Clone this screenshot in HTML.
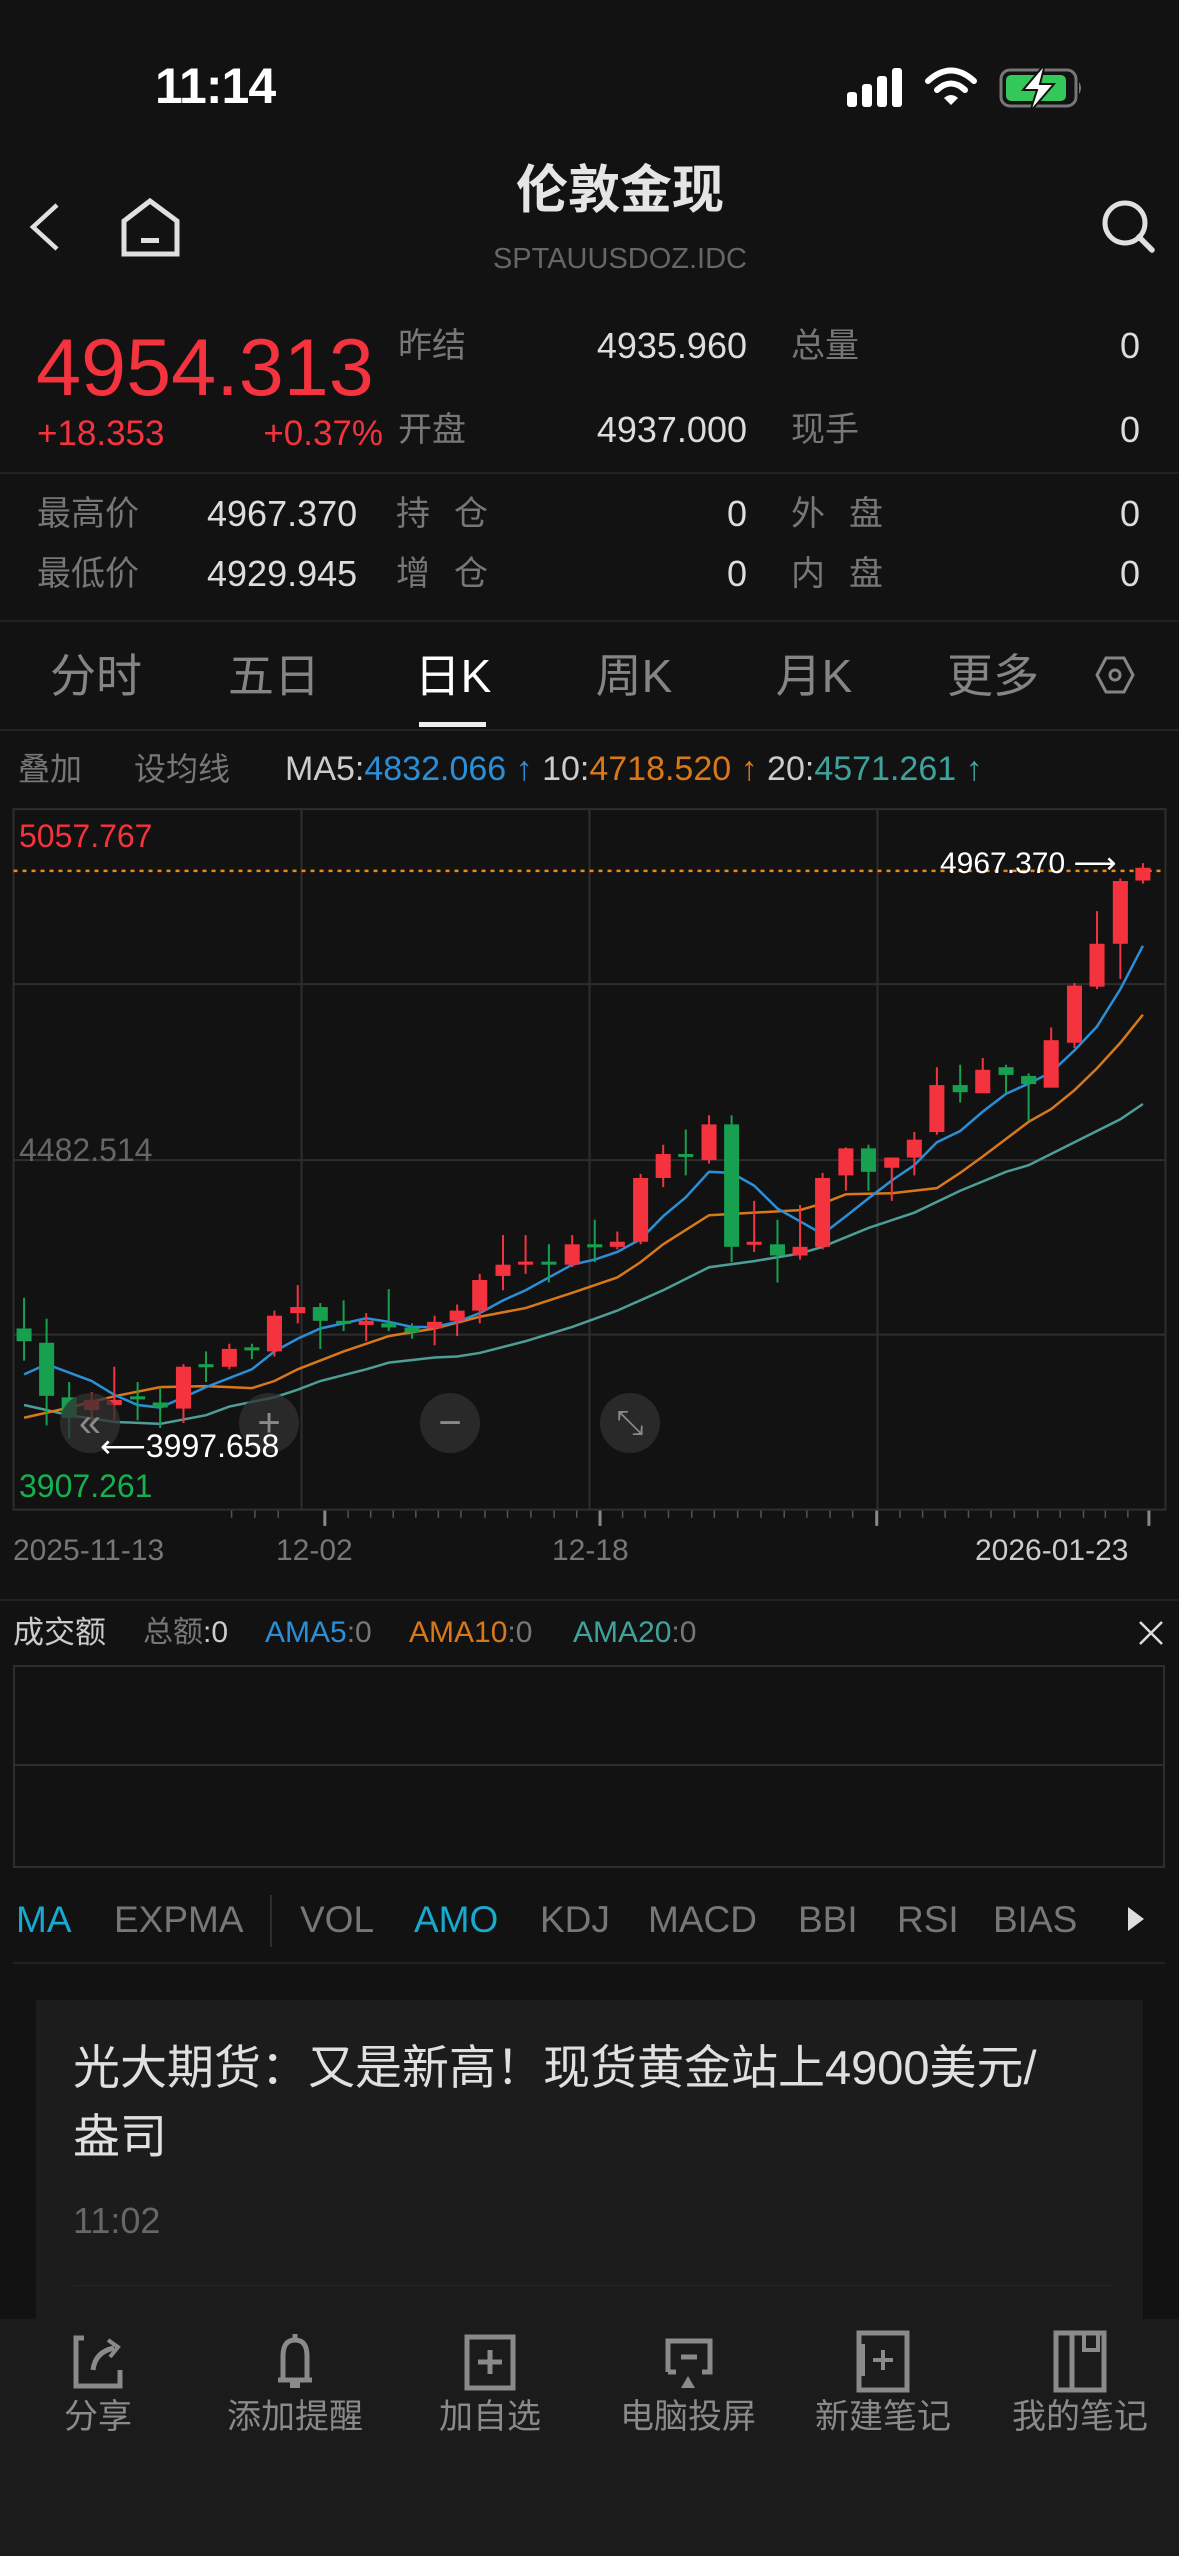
<!DOCTYPE html>
<html><head><meta charset="utf-8"><style>
*{margin:0;padding:0;box-sizing:border-box}
body{width:1179px;height:2556px;background:#121212;position:relative;overflow:hidden;font-family:"Liberation Sans","Noto Sans CJK SC",sans-serif;color:#ddd}
.a{position:absolute;white-space:nowrap}
.lbl{color:#777;font-size:34px;line-height:40px}
.val{color:#ddd;font-size:36px;line-height:40px}
.tab{position:absolute;top:648px;font-size:46px;line-height:56px;color:#858585;transform:translateX(-50%);white-space:nowrap}
.ind{position:absolute;top:1898px;font-size:37px;line-height:44px;color:#777;white-space:nowrap}
.bt{position:absolute;top:2397px;font-size:34px;line-height:40px;color:#8a8a8a;transform:translateX(-50%);white-space:nowrap}
.cb{position:absolute;width:60px;height:60px;border-radius:50%;background:rgba(50,50,50,.75);top:1393px;color:#8a8a8a;font-size:40px;line-height:60px;text-align:center}
</style></head><body>

<!-- status -->
<div class="a" style="left:155px;top:58px;font-size:50px;line-height:56px;font-weight:bold;color:#fff;letter-spacing:-1px">11:14</div>
<svg class="a" style="left:840px;top:60px" width="260" height="56" viewBox="0 0 260 56">
<rect x="7" y="32" width="10" height="15" rx="3" fill="#fff"/><rect x="22" y="24" width="10" height="23" rx="3" fill="#fff"/><rect x="37" y="16" width="10" height="31" rx="3" fill="#fff"/><rect x="52" y="8" width="10" height="39" rx="3" fill="#fff"/>
<path d="M88 21 Q111 0 134 21" stroke="#fff" stroke-width="6" fill="none" stroke-linecap="round"/>
<path d="M97 30 Q111 17 125 30" stroke="#fff" stroke-width="6" fill="none" stroke-linecap="round"/>
<path d="M104 38 L111 45 L118 38 Q111 32 104 38Z" fill="#fff"/>
<rect x="161" y="10" width="75" height="36" rx="9" stroke="#777" stroke-width="3" fill="none"/>
<rect x="166" y="15" width="60" height="26" rx="5" fill="#34c759"/>
<path d="M239 22 v12 q4-6 0-12z" fill="#777"/>
<path d="M205 4 L183 30 L197 30 L190 52 L214 24 L200 24 Z" fill="#fff" stroke="#121212" stroke-width="2"/>
</svg>

<!-- nav -->
<svg class="a" style="left:0;top:190px" width="200" height="80" viewBox="0 190 200 80">
<path d="M57 205 L33 227 L57 249" stroke="#e0e0e0" stroke-width="4.5" fill="none"/>
<path d="M150 201 L124 221 L124 254 L177 254 L177 221 Z" stroke="#e0e0e0" stroke-width="5" fill="none" stroke-linejoin="miter"/>
<rect x="141" y="238" width="18" height="5" fill="#e0e0e0"/>
</svg>
<div class="a" style="left:0;width:1240px;text-align:center;top:160px;font-size:52px;line-height:62px;color:#e5e5e5;font-weight:bold">伦敦金现</div>
<div class="a" style="left:0;width:1240px;text-align:center;top:242px;font-size:29px;line-height:34px;color:#666">SPTAUUSDOZ.IDC</div>
<svg class="a" style="left:1098px;top:196px" width="60" height="60" viewBox="0 0 60 60">
<circle cx="27" cy="27" r="20" stroke="#e0e0e0" stroke-width="5" fill="none"/><path d="M41 41 L54 54" stroke="#e0e0e0" stroke-width="5.5" stroke-linecap="round"/>
</svg>

<!-- quote -->
<div class="a" style="left:36px;top:320px;font-size:81px;line-height:96px;color:#f5333f">4954.313</div>
<div class="a" style="left:37px;top:414px;font-size:35px;line-height:40px;color:#f5333f">+18.353</div>
<div class="a" style="left:200px;width:183px;text-align:right;top:414px;font-size:35px;line-height:40px;color:#f5333f">+0.37%</div>
<div class="a lbl" style="left:398px;top:326px">昨结</div>
<div class="a val" style="left:560px;width:187px;text-align:right;top:326px">4935.960</div>
<div class="a lbl" style="left:791px;top:326px">总量</div>
<div class="a val" style="left:1040px;width:100px;text-align:right;top:326px">0</div>
<div class="a lbl" style="left:398px;top:410px">开盘</div>
<div class="a val" style="left:560px;width:187px;text-align:right;top:410px">4937.000</div>
<div class="a lbl" style="left:791px;top:410px">现手</div>
<div class="a val" style="left:1040px;width:100px;text-align:right;top:410px">0</div>
<div class="a" style="left:0;top:472px;width:1179px;height:2px;background:#222"></div>

<div class="a lbl" style="left:37px;top:494px">最高价</div>
<div class="a val" style="left:207px;top:494px">4967.370</div>
<div class="a lbl" style="left:396px;top:494px;letter-spacing:24px">持仓</div>
<div class="a val" style="left:650px;width:97px;text-align:right;top:494px">0</div>
<div class="a lbl" style="left:791px;top:494px;letter-spacing:24px">外盘</div>
<div class="a val" style="left:1040px;width:100px;text-align:right;top:494px">0</div>
<div class="a lbl" style="left:37px;top:554px">最低价</div>
<div class="a val" style="left:207px;top:554px">4929.945</div>
<div class="a lbl" style="left:396px;top:554px;letter-spacing:24px">增仓</div>
<div class="a val" style="left:650px;width:97px;text-align:right;top:554px">0</div>
<div class="a lbl" style="left:791px;top:554px;letter-spacing:24px">内盘</div>
<div class="a val" style="left:1040px;width:100px;text-align:right;top:554px">0</div>
<div class="a" style="left:0;top:620px;width:1179px;height:2px;background:#222"></div>

<!-- tabs -->
<div class="tab" style="left:96px">分时</div>
<div class="tab" style="left:274px">五日</div>
<div class="tab" style="left:453px;color:#fff">日K</div>
<div class="tab" style="left:634px">周K</div>
<div class="tab" style="left:814px">月K</div>
<div class="tab" style="left:993px">更多</div>
<svg class="a" style="left:1095px;top:655px" width="40" height="40" viewBox="0 0 40 40"><path d="M11 3 L29 3 L38 20 L29 37 L11 37 L2 20 Z" stroke="#858585" stroke-width="3" fill="none"/><circle cx="20" cy="20" r="5" stroke="#858585" stroke-width="3" fill="none"/></svg>
<div class="a" style="left:419px;top:722px;width:67px;height:5px;background:#eee"></div>
<div class="a" style="left:0;top:729px;width:1179px;height:2px;background:#242424"></div>

<div class="a" style="left:18px;top:750px;font-size:32px;line-height:38px;color:#777">叠加</div>
<div class="a" style="left:134px;top:750px;font-size:32px;line-height:38px;color:#777">设均线</div>
<div class="a" style="left:285px;top:749px;font-size:34px;line-height:40px;color:#ccc">MA5:<span style="color:#2b8fd8">4832.066 ↑</span> 10:<span style="color:#d9781a">4718.520 ↑</span> 20:<span style="color:#3fa39c">4571.261 ↑</span></div>

<!-- chart -->
<svg class="a" style="left:0;top:780px" width="1179" height="800" viewBox="0 0 1568 1568" preserveAspectRatio="none">
<g stroke="#2e2e2e" stroke-width="2" vector-effect="non-scaling-stroke" fill="none">
<rect x="18" y="57" width="1532" height="1373" vector-effect="non-scaling-stroke"/>
<line x1="18" y1="400" x2="1550" y2="400" vector-effect="non-scaling-stroke"/>
<line x1="18" y1="745" x2="1550" y2="745" vector-effect="non-scaling-stroke"/>
<line x1="18" y1="1087" x2="1550" y2="1087" vector-effect="non-scaling-stroke"/>
<line x1="401" y1="57" x2="401" y2="1430" vector-effect="non-scaling-stroke"/>
<line x1="784" y1="57" x2="784" y2="1430" vector-effect="non-scaling-stroke"/>
<line x1="1167" y1="57" x2="1167" y2="1430" vector-effect="non-scaling-stroke"/>
</g>
<g stroke="#555" stroke-width="1.5">
<path vector-effect="non-scaling-stroke" d="M308 1432v14M339 1432v14M370 1432v14M463 1432v14M493 1432v14M523 1432v14M553 1432v14M583 1432v14M613 1432v14M645 1432v14M675 1432v14M706 1432v14M737 1432v14M767 1432v14M828 1432v14M858 1432v14M889 1432v14M920 1432v14M950 1432v14M981 1432v14M1012 1432v14M1043 1432v14M1073 1432v14M1104 1432v14M1134 1432v14M1197 1432v14M1227 1432v14M1257 1432v14M1288 1432v14M1318 1432v14M1349 1432v14M1380 1432v14M1410 1432v14M1441 1432v14M1470 1432v14M1500 1432v14"/>
</g>
<g stroke="#888" stroke-width="3"><path vector-effect="non-scaling-stroke" d="M432 1432v30M798 1432v30M1166 1432v30M1528 1432v30"/></g>
<line x1="18" y1="178" x2="1550" y2="178" stroke="#f0891c" stroke-width="2.5" stroke-dasharray="4 5" vector-effect="non-scaling-stroke"/>
<polyline vector-effect="non-scaling-stroke" fill="none" stroke="#4e9e98" stroke-width="2.5" points="32,1225 92,1245 152,1258 213,1262 274,1245 305,1228 365,1210 396,1195 426,1178 487,1155 517,1142 578,1132 608,1130 638,1123 699,1100 761,1072 821,1040 882,1000 943,955 1003,943 1064,928 1094,915 1155,878 1216,848 1277,805 1338,768 1368,755 1429,710 1490,665 1520,635"/>
<polyline vector-effect="non-scaling-stroke" fill="none" stroke="#d9781a" stroke-width="2.5" points="32,1250 92,1230 152,1208 213,1190 274,1188 335,1192 365,1178 396,1155 457,1120 517,1090 578,1075 638,1052 699,1035 761,1005 821,975 852,945 882,910 943,853 1003,848 1064,843 1094,830 1125,812 1186,810 1246,800 1277,770 1307,738 1368,670 1398,645 1429,608 1459,565 1490,515 1520,460"/>
<polyline vector-effect="non-scaling-stroke" fill="none" stroke="#2b8fd8" stroke-width="2.5" points="32,1165 62,1145 122,1178 152,1205 183,1225 213,1230 244,1210 274,1190 335,1155 365,1120 396,1095 426,1075 487,1055 517,1062 548,1072 578,1072 608,1062 638,1045 669,1020 699,1000 730,975 761,950 791,940 821,925 852,900 882,855 912,818 943,768 973,770 1003,795 1034,840 1064,865 1094,890 1125,855 1155,820 1186,785 1216,755 1246,710 1277,688 1307,650 1338,615 1368,595 1398,573 1429,530 1459,483 1490,410 1520,325"/>
<g fill="#17a04f" stroke="#17a04f">
<path vector-effect="non-scaling-stroke" stroke-width="2" d="M32 1015V1138M62 1056V1265M92 1180V1290M183 1180V1255M213 1190V1270M274 1120V1180M335 1105V1135M426 1025V1115M457 1020V1080M517 998V1080M548 1065V1095M730 910V985M791 862V945M912 685V775M973 657V945M1034 862V985M1155 715V805M1277 558V632M1338 558V615M1368 575V668"/>
<g stroke="none">
<rect x="22" y="1075" width="20" height="25"/><rect x="52" y="1103" width="20" height="104"/><rect x="82" y="1210" width="20" height="40"/><rect x="173" y="1208" width="20" height="6"/><rect x="203" y="1220" width="20" height="10"/><rect x="264" y="1145" width="20" height="6"/><rect x="325" y="1112" width="20" height="6"/><rect x="416" y="1033" width="20" height="27"/><rect x="447" y="1060" width="20" height="6"/><rect x="507" y="1065" width="20" height="8"/><rect x="538" y="1073" width="20" height="10"/><rect x="720" y="944" width="20" height="6"/><rect x="781" y="910" width="20" height="6"/><rect x="902" y="733" width="20" height="6"/><rect x="963" y="675" width="20" height="240"/><rect x="1024" y="910" width="20" height="22"/><rect x="1145" y="722" width="20" height="46"/><rect x="1267" y="598" width="20" height="14"/><rect x="1328" y="563" width="20" height="15"/><rect x="1358" y="580" width="20" height="16"/>
</g></g>
<g fill="#f5333f" stroke="#f5333f">
<path vector-effect="non-scaling-stroke" stroke-width="2" d="M122 1200V1260M152 1150V1255M244 1145V1260M305 1105V1155M365 1040V1130M396 990V1065M487 1045V1100M578 1050V1108M608 1028V1090M638 968V1065M669 892V1000M699 892V968M761 892V955M821 885V920M852 772V910M882 715V798M943 657V752M1003 825V925M1064 833V940M1094 770V920M1125 720V805M1186 740V825M1216 690V775M1246 563V695M1307 545V614M1398 485V603M1429 398V525M1459 257V410M1490 193V390M1520 163V203"/>
<g stroke="none">
<rect x="112" y="1215" width="20" height="20"/><rect x="142" y="1215" width="20" height="10"/><rect x="234" y="1150" width="20" height="82"/><rect x="295" y="1115" width="20" height="35"/><rect x="355" y="1050" width="20" height="70"/><rect x="386" y="1033" width="20" height="12"/><rect x="477" y="1060" width="20" height="8"/><rect x="568" y="1062" width="20" height="13"/><rect x="598" y="1040" width="20" height="20"/><rect x="628" y="980" width="20" height="60"/><rect x="659" y="950" width="20" height="22"/><rect x="689" y="944" width="20" height="6"/><rect x="751" y="910" width="20" height="40"/><rect x="811" y="905" width="20" height="10"/><rect x="842" y="780" width="20" height="125"/><rect x="872" y="733" width="20" height="47"/><rect x="933" y="675" width="20" height="70"/><rect x="993" y="905" width="20" height="6"/><rect x="1054" y="915" width="20" height="17"/><rect x="1084" y="780" width="20" height="135"/><rect x="1115" y="722" width="20" height="53"/><rect x="1176" y="740" width="20" height="20"/><rect x="1206" y="705" width="20" height="35"/><rect x="1236" y="598" width="20" height="92"/><rect x="1297" y="568" width="20" height="46"/><rect x="1388" y="510" width="20" height="93"/><rect x="1419" y="403" width="20" height="112"/><rect x="1449" y="321" width="20" height="84"/><rect x="1480" y="198" width="20" height="123"/><rect x="1510" y="172" width="20" height="25"/>
</g></g>
</svg>
<div class="a" style="left:19px;top:818px;font-size:32px;line-height:36px;color:#f5333f">5057.767</div>
<div class="a" style="left:19px;top:1132px;font-size:32px;line-height:36px;color:#666">4482.514</div>
<div class="a" style="left:19px;top:1468px;font-size:32px;line-height:36px;color:#17b050">3907.261</div>
<div class="a" style="left:940px;top:846px;font-size:30px;line-height:36px;color:#fff">4967.370 ⟶</div>
<div class="cb" style="left:60px">«</div>
<div class="cb" style="left:239px">+</div>
<div class="cb" style="left:420px">−</div>
<div class="cb" style="left:600px;font-size:34px">⤡</div>
<div class="a" style="left:100px;top:1428px;font-size:32px;line-height:36px;color:#fff">⟵3997.658</div>

<div class="a" style="left:13px;top:1533px;font-size:30px;line-height:36px;color:#777">2025-11-13</div>
<div class="a" style="left:276px;top:1533px;font-size:30px;line-height:36px;color:#777">12-02</div>
<div class="a" style="left:552px;top:1533px;font-size:30px;line-height:36px;color:#777">12-18</div>
<div class="a" style="left:975px;top:1533px;font-size:30px;line-height:36px;color:#ccc">2026-01-23</div>

<!-- amount -->
<div class="a" style="left:0;top:1599px;width:1179px;height:2px;background:#222"></div>
<div class="a" style="left:13px;top:1614px;font-size:31px;line-height:38px;color:#ccc">成交额</div>
<div class="a" style="left:143px;top:1614px;font-size:30px;line-height:38px;color:#777">总额<span style="color:#ccc">:0</span></div>
<div class="a" style="left:265px;top:1614px;font-size:30px;line-height:38px;color:#2b8fd8">AMA5<span style="color:#777">:0</span></div>
<div class="a" style="left:409px;top:1614px;font-size:30px;line-height:38px;color:#d9781a">AMA10<span style="color:#777">:0</span></div>
<div class="a" style="left:573px;top:1614px;font-size:30px;line-height:38px;color:#3fa39c">AMA20<span style="color:#777">:0</span></div>
<svg class="a" style="left:1138px;top:1620px" width="26" height="26" viewBox="0 0 26 26"><path d="M2 2L24 24M24 2L2 24" stroke="#ddd" stroke-width="2.5"/></svg>
<div class="a" style="left:13px;top:1665px;width:1152px;height:203px;border:2px solid #2e2e2e"></div>
<div class="a" style="left:13px;top:1764px;width:1152px;height:2px;background:#2e2e2e"></div>

<div class="ind" style="left:16px;color:#17a9cf">MA</div>
<div class="ind" style="left:114px">EXPMA</div>
<div class="a" style="left:270px;top:1895px;width:2px;height:52px;background:#2e2e2e"></div>
<div class="ind" style="left:300px">VOL</div>
<div class="ind" style="left:414px;color:#17a9cf">AMO</div>
<div class="ind" style="left:540px">KDJ</div>
<div class="ind" style="left:648px">MACD</div>
<div class="ind" style="left:798px">BBI</div>
<div class="ind" style="left:897px">RSI</div>
<div class="ind" style="left:993px">BIAS</div>
<svg class="a" style="left:1126px;top:1906px" width="20" height="26" viewBox="0 0 20 26"><path d="M2 1L18 13L2 25Z" fill="#ddd"/></svg>
<div class="a" style="left:13px;top:1962px;width:1152px;height:2px;background:#222"></div>

<!-- news -->
<div class="a" style="left:36px;top:2000px;width:1107px;height:330px;background:#1c1c1c"></div>
<div class="a" style="left:73px;top:2038px;font-size:47px;line-height:60px;color:#e0e0e0">光大期货：又是新高！现货黄金站上4900美元/</div>
<div class="a" style="left:73px;top:2107px;font-size:47px;line-height:60px;color:#e0e0e0">盎司</div>
<div class="a" style="left:73px;top:2201px;font-size:36px;line-height:40px;color:#666">11:02</div>
<div class="a" style="left:73px;top:2285px;width:1040px;height:1px;background:#262626"></div>

<!-- bottom bar -->
<div class="a" style="left:0;top:2319px;width:1179px;height:237px;background:#1b1b1b"></div>
<svg class="a" style="left:0;top:2330px" width="1179" height="64" viewBox="0 0 1179 64">
<g stroke="#8a8a8a" stroke-width="5" fill="none">
<path d="M84 8 H76 V56 H120 V40"/><path d="M93 40 Q95 22 114 18"/><path d="M108 10 L118 17 L110 27" stroke-width="4"/>
<path d="M283 50 V26 Q283 10 295 10 Q307 10 307 26 V50 Z" /><path d="M278 50 H312"/><path d="M295 4 V10"/>
<rect x="467" y="7" width="46" height="51"/><path d="M490 20 V44 M478 32 H502"/>
<path d="M668 42 V11 H710 V42 H702 M676 42 H668"/><path d="M681 27 H697" />
<rect x="859" y="3" width="48" height="57"/><path d="M883 20 V40 M873 30 H893" stroke-width="4"/><path d="M863 14 V46" stroke-width="4"/>
<rect x="1056" y="3" width="48" height="57"/><path d="M1072 3 V60" /><path d="M1084 3 V20 H1098 V3" stroke-width="4"/>
</g>
<path d="M681 58 L688 46 L695 58Z" fill="#8a8a8a"/>
<rect x="290" y="52" width="10" height="6" fill="#8a8a8a"/>
</svg>
<div class="bt" style="left:98px">分享</div>
<div class="bt" style="left:295px">添加提醒</div>
<div class="bt" style="left:490px">加自选</div>
<div class="bt" style="left:688px">电脑投屏</div>
<div class="bt" style="left:883px">新建笔记</div>
<div class="bt" style="left:1080px">我的笔记</div>
</body></html>
